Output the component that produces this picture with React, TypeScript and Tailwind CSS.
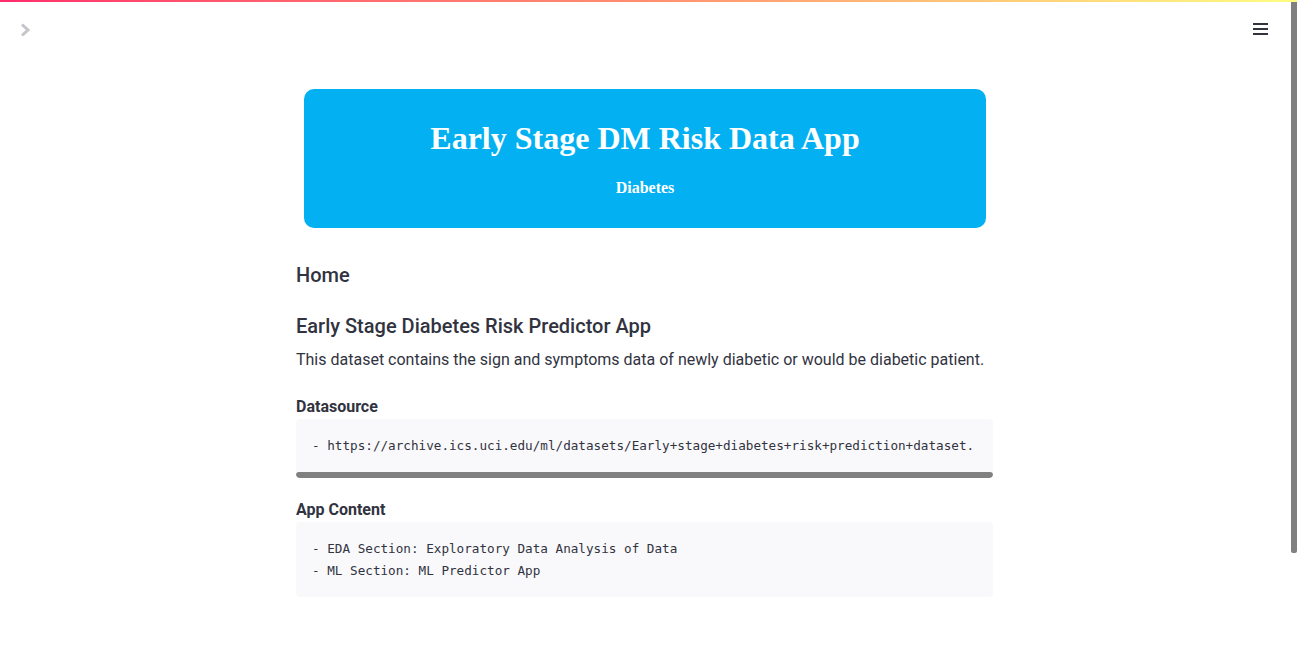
import { ReactNode } from 'react';

const sans = { fontFamily: 'Roboto, "Noto Sans", sans-serif' };

function CodeBlock({ lines, scroll }: { lines: string[]; scroll?: boolean }) {
    return (
        <div className="bg-[#f9f9fb] rounded-[4px] overflow-hidden">
            <pre
                className="px-4 pt-4 pb-[15px] text-[12.65px] leading-[22px] text-[#31333f] whitespace-pre"
                style={{ fontFamily: '"DejaVu Sans Mono", "Liberation Mono", monospace' }}
            >
                {lines.join('\n')}
            </pre>
            {scroll && <div className="h-[6px] bg-[#808080] rounded-[3px]" />}
        </div>
    );
}

function Label({ children, top }: { children: ReactNode; top: string }) {
    return <div className={`${top} text-[16px] leading-[24px] font-bold text-[#31333f]`}>{children}</div>;
}

export default function App() {
    return (
        <div className="relative h-[670px] w-full overflow-hidden bg-white" style={sans}>
            <div className="h-[2px] w-full bg-gradient-to-r from-[#ff2b6b] via-[#ff8f70] to-[#fffd80]" />

            <div className="flex items-center justify-between px-[20px] pt-[16px] h-[36px]">
                <svg width="11" height="14" viewBox="0 0 11 14" className="mt-[3px]">
                    <path d="M2 1.5 L8 7 L2 12.5" fill="none" stroke="#c4c6cc" strokeWidth="3" />
                </svg>
                <div className="flex flex-col gap-[3px] mr-[9px] mt-[2px]">
                    <div className="w-[15px] h-[2px] bg-[#31333f]" />
                    <div className="w-[15px] h-[2px] bg-[#31333f]" />
                    <div className="w-[15px] h-[2px] bg-[#31333f]" />
                </div>
            </div>

            <div className="w-[697px] ml-[296px] pt-[51px]">
                <div
                    className="mx-[8px] w-[682px] bg-[#03b1f2] rounded-[10px] pt-[30px] pb-[30px] text-white text-center"
                    style={{ fontFamily: '"Liberation Serif", "Times New Roman", serif' }}
                >
                    <h1 className="text-[32px] leading-[38px] font-bold">Early Stage DM Risk Data App</h1>
                    <p className="mt-[21px] text-[16px] leading-[20px] font-bold">Diabetes</p>
                </div>

                <h3 className="mt-[33px] text-[20px] leading-[28px] font-medium text-[#31333f]">Home</h3>
                <h3 className="mt-[23px] text-[20px] leading-[28px] font-medium text-[#31333f]">Early Stage Diabetes Risk Predictor App</h3>
                <p className="mt-[8px] text-[16px] leading-[24px] text-[#31333f] whitespace-nowrap">
                    This dataset contains the sign and symptoms data of newly diabetic or would be diabetic patient.
                </p>

                <Label top="mt-[23px]">Datasource</Label>
                <CodeBlock
                    scroll
                    lines={['- https://archive.ics.uci.edu/ml/datasets/Early+stage+diabetes+risk+prediction+dataset.']}
                />

                <Label top="mt-[20px]">App Content</Label>
                <CodeBlock lines={['- EDA Section: Exploratory Data Analysis of Data', '- ML Section: ML Predictor App']} />
            </div>

            <div className="absolute right-0 top-[2px] w-[6px] h-[551px] bg-[#808080] rounded-b-[2px]" />
        </div>
    );
}
